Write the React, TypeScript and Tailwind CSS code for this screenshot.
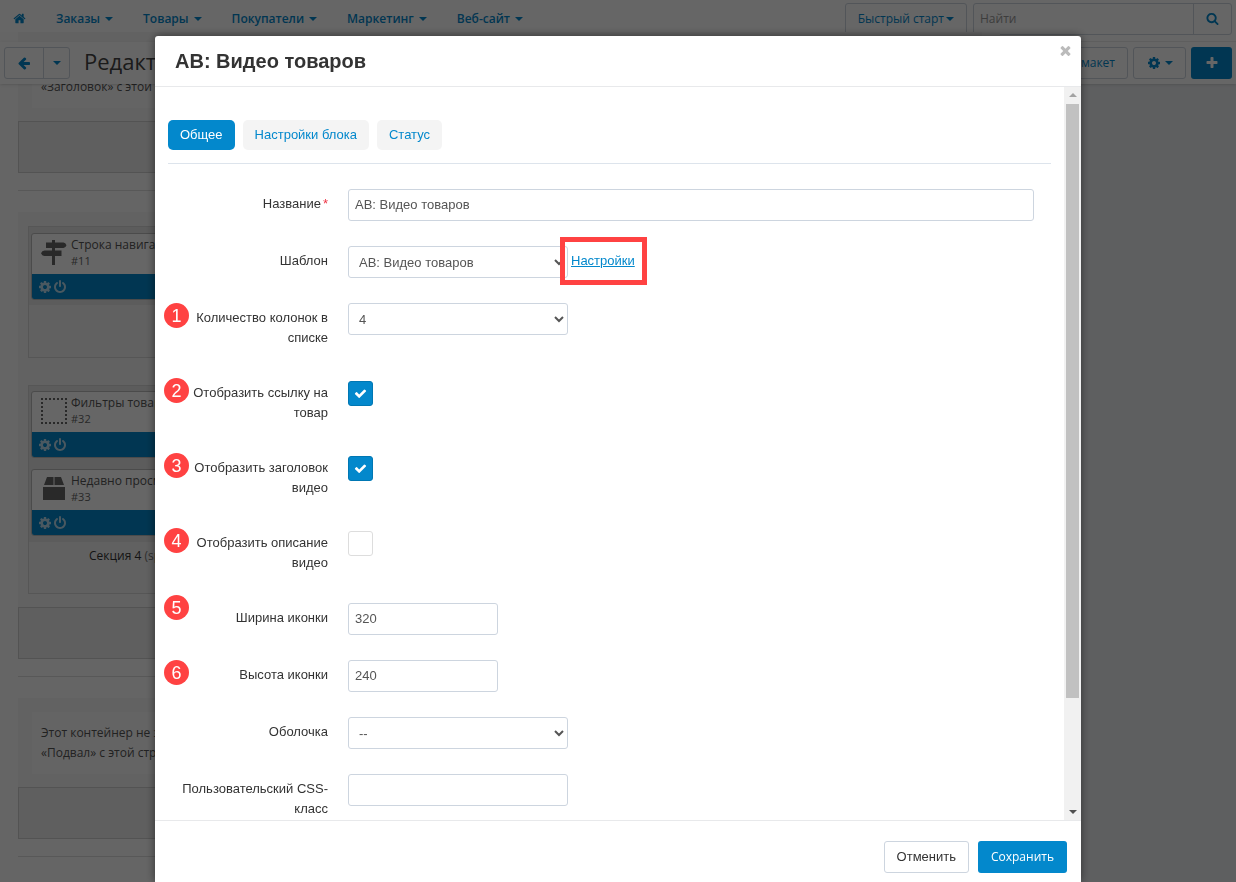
import type { ReactNode } from "react";

const menu = ["Заказы", "Товары", "Покупатели", "Маркетинг", "Веб-сайт"];

// Font Awesome 4 glyphs
const glyphs = {
    home: "M1472 992v480q0 26-19 45t-45 19h-384v-384h-256v384h-384q-26 0-45-19t-19-45v-480q0-1 .5-3t.5-3l575-474 575 474q1 2 1 6zm223-69l-62 74q-8 9-21 11h-3q-13 0-21-7l-692-577-692 577q-12 8-24 7-13-2-21-11l-62-74q-8-10-7-23.5t11-21.5l719-599q32-26 76-26t76 26l244 204v-195q0-14 9-23t23-9h192q14 0 23 9t9 23v408l219 182q10 8 11 21.5t-7 23.5z",
    search: "M1216 832q0-185-131.5-316.5t-316.5-131.5-316.5 131.5-131.5 316.5 131.5 316.5 316.5 131.5 316.5-131.5 131.5-316.5zm512 832q0 52-38 90t-90 38q-54 0-90-38l-343-342q-179 124-399 124-143 0-273.5-55.5t-225-150-150-225-55.5-273.5 55.5-273.5 150-225 225-150 273.5-55.5 273.5 55.5 225 150 150 225 55.5 273.5q0 220-124 399l343 343q37 37 37 90z",
    back: "M1664 896v128q0 53-32.5 90.5t-84.5 37.5h-704l293 294q38 36 38 90t-38 90l-75 76q-37 37-90 37-52 0-91-37l-651-652q-37-37-37-90 0-52 37-91l651-650q38-38 91-38 52 0 90 38l75 74q38 38 38 91t-38 91l-293 293h704q52 0 84.5 37.5t32.5 90.5z",
    cog: "M1152 896q0-106-75-181t-181-75-181 75-75 181 75 181 181 75 181-75 75-181zm512-109v222q0 12-8 23t-20 13l-185 28q-19 54-39 91 35 50 107 138 10 12 10 25t-9 23q-27 37-99 108t-94 71q-12 0-26-9l-138-108q-44 23-91 38-16 136-29 186-7 28-36 28h-222q-14 0-24.5-8.5t-11.5-21.5l-28-184q-49-16-90-37l-141 107q-10 9-25 9-14 0-25-11-126-114-165-168-7-10-7-23 0-12 8-23 15-21 51-66.5t54-70.5q-27-50-41-99l-183-27q-13-2-21-12.5t-8-23.5v-222q0-12 8-23t19-13l186-28q14-46 39-92-40-57-107-138-10-12-10-24 0-10 9-23 26-36 98.5-107.5t94.5-71.5q13 0 26 10l138 107q44-23 91-38 16-136 29-186 7-28 36-28h222q14 0 24.5 8.5t11.5 21.5l28 184q49 16 90 37l142-107q9-9 24-9 13 0 25 10 129 119 165 170 7 8 7 22 0 12-8 23-15 21-51 66.5t-54 70.5q26 50 41 98l183 28q13 2 21 12.5t8 23.5z",
    plus: "M1600 736v192q0 40-28 68t-68 28h-416v416q0 40-28 68t-68 28h-192q-40 0-68-28t-28-68v-416h-416q-40 0-68-28t-28-68v-192q0-40 28-68t68-28h416v-416q0-40 28-68t68-28h192q40 0 68 28t28 68v416h416q40 0 68 28t28 68z",
    power: "M1664 896q0 156-61 298t-164 245-245 164-298 61-298-61-245-164-164-245-61-298q0-182 80.5-343t226.5-270q43-32 95.5-25t83.5 50q32 42 24.5 94.5t-49.5 84.5q-98 74-151.5 181t-53.5 228q0 104 40.5 198.5t109.5 163.5 163.5 109.5 198.5 40.5 198.5-40.5 163.5-109.5 109.5-163.5 40.5-198.5q0-121-53.5-228t-151.5-181q-42-32-49.5-84.5t24.5-94.5q31-43 84-50t95 25q146 109 226.5 270t80.5 343zm-640-768v640q0 52-38 90t-90 38-90-38-38-90v-640q0-52 38-90t90-38 90 38 38 90z",
    times: "M1490 1322q0 40-28 68l-136 136q-28 28-68 28t-68-28l-294-294-294 294q-28 28-68 28t-68-28l-136-136q-28-28-28-68t28-68l294-294-294-294q-28-28-28-68t28-68l136-136q28-28 68-28t68 28l294 294 294-294q28-28 68-28t68 28l136 136q28 28 28 68t-28 68l-294 294 294 294q28 28 28 68z",
    check: "M1671 566q0 40-28 68l-724 724-136 136q-28 28-68 28t-68-28l-136-136-362-362q-28-28-28-68t28-68l136-136q28-28 68-28t68 28l294 295 656-657q28-28 68-28t68 28l136 136q28 28 28 68z",
};

const Icon = ({ name, className = "w-3.5 h-3.5" }: { name: keyof typeof glyphs; className?: string }) => (
    <svg viewBox="0 0 1792 1792" className={className} fill="currentColor" aria-hidden="true">
        <path d={glyphs[name]} />
    </svg>
);

const Caret = () => (
    <svg viewBox="0 0 8 4" className="w-2 h-1 shrink-0" fill="currentColor" aria-hidden="true">
        <path d="M0 0h8L4 4z" />
    </svg>
);

const SignsIcon = () => (
    <svg viewBox="0 0 26 26" className="w-[26px] h-[26px]" fill="currentColor" aria-hidden="true">
        <path d="M11 0h3v2.500h8.500q2 0 3 2.800q-1 2.700-3 2.700H14v2.500h6.500v5.500H14V25h-3v-9H3.500Q1 16 0 13.200q1-2.700 3.500-2.700H11V8H5V2.500h6z" />
    </svg>
);

const BoxIcon = () => (
    <svg viewBox="0 0 22 24" className="w-[22px] h-6" fill="currentColor" aria-hidden="true">
        <path d="M4 0h6.500v8H1zM11.500 0H18l3 8h-9.500zM0 10h22v13H0z" />
    </svg>
);

const FilterIcon = () => (
    <svg viewBox="0 0 26 26" className="w-[26px] h-[26px]" fill="none" stroke="currentColor" strokeWidth="2" strokeDasharray="2 2" aria-hidden="true">
        <path d="M0 1h26M0 25h26M1 0v26M25 0v26" />
    </svg>
);

const TopBar = () => (
    <nav className="flex items-center justify-between h-[42px] pl-[13px] pr-1 pb-1 border-b border-[#eeeeee] bg-white">
        <div className="flex items-center gap-[30px] font-semibold text-[#0388cc]">
            <a href="#home" aria-label="Главная">
                <Icon name="home" className="w-[13px] h-[13px]" />
            </a>
            {menu.map((item) => (
                <a key={item} href="#menu" className="flex items-center gap-[5px]">
                    {item} <Caret />
                </a>
            ))}
        </div>
        <div className="flex gap-1.5">
            <button className="flex items-center gap-0.5 h-8 px-3 border border-[#cdd5df] rounded-[3px] text-[#0388cc]">
                Быстрый старт <Caret />
            </button>
            <div className="flex h-8 border border-[#cdd5df] rounded-[3px]">
                <input aria-label="Найти" placeholder="Найти" className="w-[219px] px-1.5 placeholder:text-[#999999] outline-none" />
                <button aria-label="Искать" className="flex items-center justify-center w-[38px] border-l border-[#cdd5df] text-[#0388cc]">
                    <Icon name="search" className="w-[13px] h-[13px]" />
                </button>
            </div>
        </div>
    </nav>
);

const ActionBar = () => (
    <div className="relative z-10 flex items-center justify-between h-[42px] px-1 bg-white shadow-sm">
        <div className="flex items-center gap-3.5">
            <div className="flex h-8 border border-[#cdd5df] rounded-[3px] text-[#0388cc]">
                <button aria-label="Назад" className="flex items-center justify-center w-[39px] border-r border-[#cdd5df]">
                    <Icon name="back" />
                </button>
                <button aria-label="История" className="flex items-center justify-center w-[25px]">
                    <Caret />
                </button>
            </div>
            <h1 className="pb-1 text-[22px] leading-8 text-[#444444]">Редактор</h1>
        </div>
        <div className="flex gap-[5px] text-[#0388cc]">
            <button className="h-8 px-3 border border-[#cdd5df] rounded-[3px]">Экспортировать макет</button>
            <button aria-label="Настройки" className="flex items-center justify-center gap-1 w-[53px] h-8 border border-[#cdd5df] rounded-[3px]">
                <Icon name="cog" /> <Caret />
            </button>
            <button aria-label="Добавить" className="flex items-center justify-center w-[41px] h-8 rounded-[3px] bg-[#0388cc] text-white">
                <Icon name="plus" />
            </button>
        </div>
    </div>
);

const Block = ({ icon, name, id }: { icon: ReactNode; name: string; id: string }) => (
    <div className="rounded-[3px] border border-[#bbbbbb] bg-white overflow-hidden">
        <div className="flex items-center gap-1 h-10 pl-2 pb-0.5 text-[#666666]">
            <span className="flex justify-center w-[27px]">{icon}</span>
            <div className="leading-4">
                <p className="text-[#555555]">{name}</p>
                <p className="text-[11px] leading-4">{id}</p>
            </div>
        </div>
        <div className="flex items-center gap-px h-[25px] pl-1.5 bg-[#0388cc] text-[#b8dcef]">
            <Icon name="cog" />
            <Icon name="power" />
        </div>
    </div>
);

const Note = ({ section }: { section: string }) => (
    <div className="px-3.5 pt-3.5 pb-[13px] bg-[#f6f6f6]">
        <div className="px-[9px] py-[11px] bg-[#fbfbfb] leading-5 text-[#555555]">
            <p>Этот контейнер не задан</p>
            <p>«{section}» с этой страницы</p>
        </div>
    </div>
);

const Slot = () => <div className="h-[52px] border border-[#d0d0d0] bg-[#ededed]" />;

const Layout = () => (
    <main className="flex flex-col flex-1 min-h-0 bg-[#ebedf0]">
        <div className="flex flex-col w-[1000px] max-w-full px-[18px] pb-8 -mt-13 bg-[#fcfcfc]">
            <Note section="Заголовок" />
            <Slot />
            <hr className="mt-[17px] mb-[21px] border-[#dddddd]" />
            <div className="px-2.5 pt-3.5 pb-[13px] bg-[#f6f6f6]">
                <div className="h-[132px] border border-[#d6d6d6] bg-[#f3f3f3]">
                    <div className="px-0.5 pt-1.5 pb-[5px] bg-[#e6e6e6]">
                        <Block icon={<SignsIcon />} name="Строка навигации" id="#11" />
                    </div>
                </div>
                <div className="mt-[27px] h-[209px] border border-[#d6d6d6] bg-[#f3f3f3]">
                    <div className="flex flex-col gap-[11px] px-0.5 pt-[5px] pb-1.5 bg-[#e6e6e6]">
                        <Block icon={<FilterIcon />} name="Фильтры товаров" id="#32" />
                        <Block icon={<BoxIcon />} name="Недавно просмотренные" id="#33" />
                    </div>
                    <p className="pl-[60px] pt-1 leading-5 text-[#333333]">Секция 4 <span className="text-[#777777]">(span4)</span></p>
                </div>
            </div>
            <Slot />
            <hr className="mt-[17px] mb-[21px] border-[#dddddd]" />
            <Note section="Подвал" />
            <Slot />
            <hr className="my-[17px] border-[#dddddd]" />
        </div>
    </main>
);

const boxClass = "h-8 px-1.5 border border-[#cdd5df] rounded-[3px] bg-white text-[#555555] outline-none";

type RowProps = { id: string; label: string; required?: boolean; num?: number; numClass?: string; children: ReactNode };

const Row = ({ id, label, required, num, numClass = "top-0", children }: RowProps) => (
    <div className="relative flex gap-5">
        {num && (
            <span className={`absolute -left-1 ${numClass} flex items-center justify-center w-[25px] h-[25px] rounded-full bg-[#ff4242] text-lg text-white`}>{num}</span>
        )}
        <label htmlFor={id} className="w-40 shrink-0 py-[5px] text-right leading-5">
            {label}
            {required && <span className="ml-0.5 text-[#ee3344]">*</span>}
        </label>
        <div className="flex flex-1 items-start">{children}</div>
    </div>
);

const Select = ({ id, value }: { id: string; value: string }) => (
    <select id={id} className={`w-[220px] ${boxClass}`}>
        <option>{value}</option>
    </select>
);

const Checkbox = ({ id, checked }: { id: string; checked?: boolean }) => (
    <span className="grid place-items-center mt-[3px]">
        <input
            id={id}
            type="checkbox"
            defaultChecked={checked}
            className="peer col-start-1 row-start-1 appearance-none w-[25px] h-[25px] rounded-[3px] border border-[#dddddd] bg-white checked:border-[#0077b3] checked:bg-[#0388cc]"
        />
        <Icon name="check" className="col-start-1 row-start-1 w-[13px] h-[13px] text-white pointer-events-none invisible peer-checked:visible" />
    </span>
);

const Form = () => (
    <form className="flex flex-col gap-[25px] mt-[25px]">
        <Row id="name" label="Название" required>
            <input id="name" defaultValue="АВ: Видео товаров" className={`flex-1 mr-[17px] pb-0.5 ${boxClass}`} />
        </Row>
        <Row id="template" label="Шаблон">
            <Select id="template" value="АВ: Видео товаров" />
            <div className="relative ml-[3px]">
                <a href="#settings" className="block py-[5px] leading-5 text-[#0388cc] underline">Настройки</a>
                <span className="absolute -left-[11px] -right-3 -top-[9px] -bottom-[9px] border-5 border-[#ff4242] pointer-events-none" />
            </div>
        </Row>
        <Row id="columns" label="Количество колонок в списке" num={1}>
            <Select id="columns" value="4" />
        </Row>
        <Row id="link" label="Отобразить ссылку на товар" num={2}>
            <Checkbox id="link" checked />
        </Row>
        <Row id="title" label="Отобразить заголовок видео" num={3}>
            <Checkbox id="title" checked />
        </Row>
        <Row id="description" label="Отобразить описание видео" num={4}>
            <Checkbox id="description" />
        </Row>
        <Row id="width" label="Ширина иконки" num={5} numClass="-top-2">
            <input id="width" defaultValue="320" className={`w-[150px] pb-0.5 ${boxClass}`} />
        </Row>
        <Row id="height" label="Высота иконки" num={6}>
            <input id="height" defaultValue="240" className={`w-[150px] pb-0.5 ${boxClass}`} />
        </Row>
        <Row id="wrapper" label="Оболочка">
            <Select id="wrapper" value="--" />
        </Row>
        <Row id="css" label="Пользовательский CSS-класс">
            <input id="css" className={`w-[220px] pb-0.5 ${boxClass}`} />
        </Row>
    </form>
);

const Scrollbar = () => (
    <div className="flex flex-col items-center w-[17px] shrink-0 bg-[#f1f1f1]" aria-hidden="true">
        <span className="flex items-center h-[17px] text-[#a3a3a3] rotate-180">
            <Caret />
        </span>
        <span className="w-[13px] h-[81%] bg-[#c1c1c1]" />
        <span className="flex items-center h-[17px] mt-auto text-[#505050]">
            <Caret />
        </span>
    </div>
);

const Dialog = () => (
    <div role="dialog" aria-label="АВ: Видео товаров" className="flex flex-col w-full max-w-[926px] flex-1 min-h-0 rounded-t-[3px] bg-white text-[13px] text-[#333333] shadow-[0_0_10px_rgba(0,0,0,0.5)] font-['Liberation_Sans',sans-serif]">
        <header className="flex items-start justify-between h-[51px] pl-5 pr-2 border-b border-[#e8e9eb]">
            <h2 className="pt-[11px] text-xl leading-7 font-bold">АВ: Видео товаров</h2>
            <button aria-label="Закрыть" className="pt-[7px] text-[#bbbbbb]">
                <Icon name="times" className="w-[15px] h-[15px]" />
            </button>
        </header>
        <div className="flex flex-1 min-h-0">
            <div className="flex-1 px-[13px] pt-[33px] overflow-hidden">
                <div className="flex gap-2 pb-[13px] border-b border-[#dde4ec]">
                    <button className="h-[30px] px-3 rounded-[5px] bg-[#0388cc] text-white">Общее</button>
                    <button className="h-[30px] px-3 rounded-[5px] bg-[#f4f4f4] text-[#0388cc]">Настройки блока</button>
                    <button className="h-[30px] px-3 rounded-[5px] bg-[#f4f4f4] text-[#0388cc]">Статус</button>
                </div>
                <Form />
            </div>
            <Scrollbar />
        </div>
        <footer className="flex justify-end gap-[9px] h-[62px] pt-5 pr-3.5 border-t border-[#e8e9eb]">
            <button className="h-8 px-3 border border-[#cdd5df] rounded-[3px]">Отменить</button>
            <button className="h-8 px-[13px] rounded-[3px] bg-[#0388cc] text-xs text-white font-['Open_Sans',sans-serif]">Сохранить</button>
        </footer>
    </div>
);

const App = () => (
    <div className="relative flex flex-col h-screen overflow-hidden text-xs font-['Open_Sans',sans-serif]">
        <TopBar />
        <ActionBar />
        <Layout />
        <div className="fixed inset-0 z-20 flex flex-col items-center pt-9 bg-black/60">
            <Dialog />
        </div>
    </div>
);

export default App;
